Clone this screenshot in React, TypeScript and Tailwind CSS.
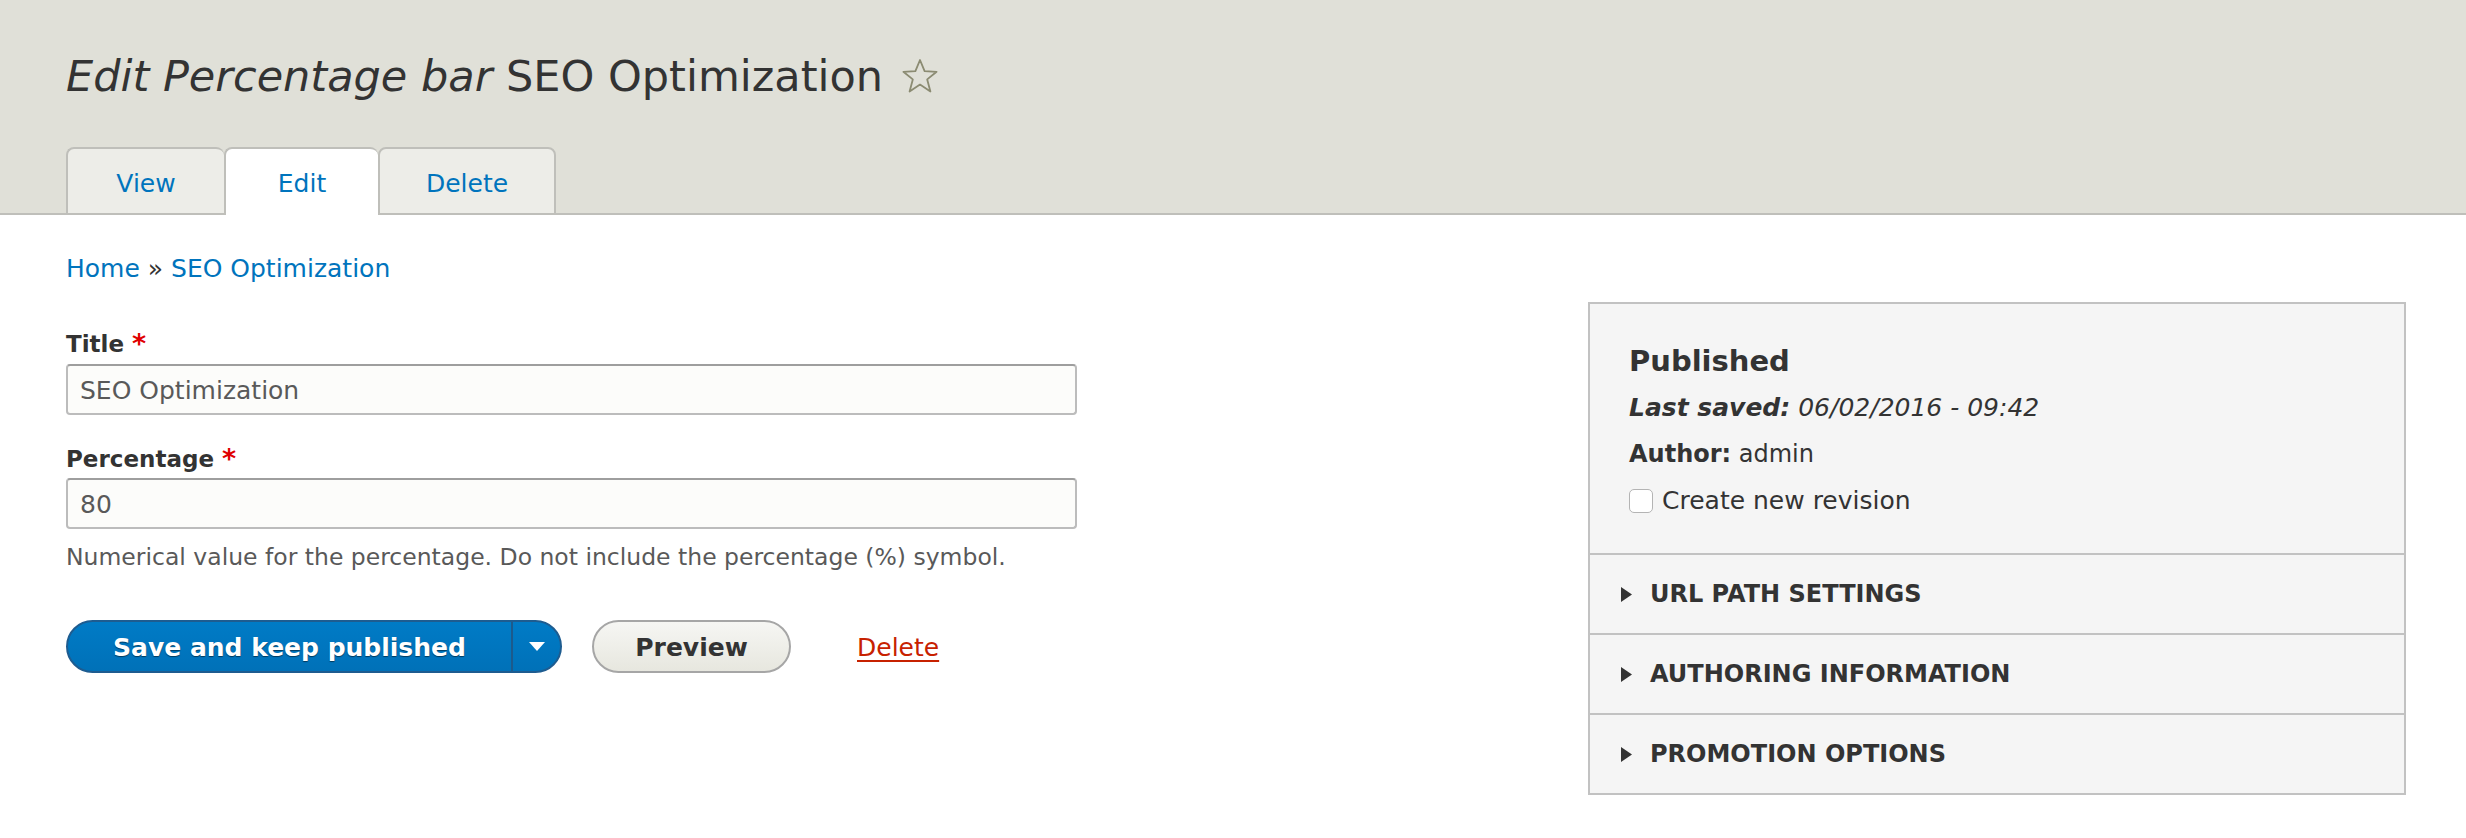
import React from "react";

// Pestañas del encabezado
const tabs = [
  { label: "View", width: "w-[158px]", active: false },
  { label: "Edit", width: "w-[154px]", active: true },
  { label: "Delete", width: "w-[178px]", active: false },
];

const sections = ["URL PATH SETTINGS", "AUTHORING INFORMATION", "PROMOTION OPTIONS"];

const Star = () => (
  <svg width="36" height="36" viewBox="0 0 36 36" className="ml-[19px] shrink-0">
    <polygon
      points="18,2 22.6,13.2 34.6,13.8 25.2,21.4 28.4,33.5 18,26.6 7.6,33.5 10.8,21.4 1.4,13.8 13.4,13.2"
      fill="none"
      stroke="#8b8b72"
      strokeWidth="1.8"
      strokeLinejoin="round"
    />
  </svg>
);

const Required = () => <span className="ml-[8px] text-[#e00000] text-[27px] leading-[28px]">*</span>;

export default function App() {
  return (
    <div className="min-h-screen bg-white font-['DejaVu_Sans',sans-serif] text-[#333]">
      {/* Encabezado */}
      <header className="bg-[#e0e0d8] border-b-2 border-[#bfbfba] px-[66px] pt-[50px]">
        <h1 className="flex items-center text-[43px] leading-[52px] font-normal">
          <span>
            <em className="italic">Edit Percentage bar</em> SEO Optimization
          </span>
          <Star />
        </h1>
        <ul className="flex mt-[45px] -mb-[2px]">
          {tabs.map((tab, i) => (
            <li
              key={tab.label}
              className={`${tab.width} h-[68px] pt-[20px] text-center text-[25px] leading-[30px] text-[#0074bd] border-t-2 border-l-2 border-[#bfbfba] rounded-t-[8px] ${
                i === tabs.length - 1 ? "border-r-2" : ""
              } ${tab.active ? "bg-white" : "bg-[#ededE8] border-b-2"}`}
            >
              {tab.label}
            </li>
          ))}
        </ul>
      </header>

      <main className="pl-[66px] pr-[60px] pt-[39px]">
        {/* Migas de pan */}
        <nav className="text-[25px] leading-[30px] text-[#0074bd]">
          Home <span className="text-[#333]">»</span> SEO Optimization
        </nav>

        <div className="flex mt-[18px]">
          {/* Formulario */}
          <div className="flex-1 pt-[28px]">
            <label className="flex items-start font-bold text-[23px] leading-[28px]">
              Title
              <Required />
            </label>
            <input
              readOnly
              defaultValue="SEO Optimization"
              className="mt-[6px] block w-[1011px] h-[51px] px-[12px] pt-[2px] text-[25px] text-[#595959] bg-[#fcfcfa] border-2 border-[#bcbcbc] border-t-[#9e9e9e] rounded-[4px] outline-none"
            />

            <label className="mt-[30px] flex items-start font-bold text-[23px] leading-[28px]">
              Percentage
              <Required />
            </label>
            <input
              readOnly
              defaultValue="80"
              className="mt-[5px] block w-[1011px] h-[51px] px-[12px] pt-[2px] text-[25px] text-[#595959] bg-[#fcfcfa] border-2 border-[#bcbcbc] border-t-[#9e9e9e] rounded-[4px] outline-none"
            />
            <p className="mt-[14px] text-[23.5px] leading-[28px] text-[#595959]">
              Numerical value for the percentage. Do not include the percentage (%) symbol.
            </p>

            {/* Botones */}
            <div className="mt-[49px] flex items-center">
              <div className="flex h-[53px] rounded-full overflow-hidden border-2 border-[#1e5c90] bg-linear-to-b from-[#007bc6] to-[#0071b8]">
                <button className="w-[443px] pt-[3px] text-center text-white font-bold text-[25px] leading-[30px] [text-shadow:0_1px_1px_rgba(0,0,0,0.5)]">
                  Save and keep published
                </button>
                <button className="w-[49px] flex items-center justify-center border-l-2 border-[#1c5a8c]">
                  <svg width="16" height="10" viewBox="0 0 16 10">
                    <polygon points="0,0 16,0 8,9" fill="#fff" />
                  </svg>
                </button>
              </div>
              <button className="ml-[30px] w-[199px] h-[53px] pt-[3px] rounded-full border-2 border-[#a6a6a6] bg-linear-to-b from-[#f6f6f3] to-[#e7e7df] text-[#333] font-bold text-[25px] leading-[30px]">
                Preview
              </button>
              <a className="ml-[66px] pt-[3px] text-[25px] leading-[30px] text-[#c72100] underline underline-offset-[4px]">
                Delete
              </a>
            </div>
          </div>

          {/* Panel lateral */}
          <aside className="w-[818px] shrink-0 border-2 border-[#c2c2c2] bg-[#f5f5f5]">
            <div className="pl-[39px] pt-[40px] pb-[37px]">
              <h2 className="font-bold text-[29px] leading-[34px]">Published</h2>
              <p className="mt-[15px] italic text-[25px] leading-[30px]">
                <strong>Last saved:</strong> 06/02/2016 - 09:42
              </p>
              <p className="mt-[16px] text-[24px] leading-[30px]">
                <strong>Author:</strong> admin
              </p>
              <div className="mt-[17px] flex items-center gap-[9px] text-[25px] leading-[30px]">
                <span className="w-[24px] h-[24px] rounded-[5px] border border-[#b4b4b4] bg-white" />
                Create new revision
              </div>
            </div>
            {sections.map((s) => (
              <div key={s} className="h-[80px] border-t-2 border-[#c2c2c2] pl-[31px] flex items-center">
                <svg width="11" height="15" viewBox="0 0 11 15">
                  <polygon points="0,0 11,7.5 0,15" fill="#333" />
                </svg>
                <span className="ml-[18px] font-bold text-[24px] leading-[28px]">{s}</span>
              </div>
            ))}
          </aside>
        </div>
      </main>
    </div>
  );
}
